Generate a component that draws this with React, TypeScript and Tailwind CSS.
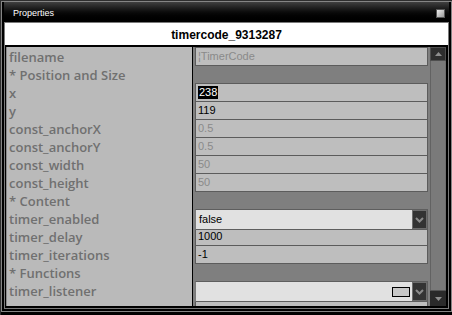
import React from "react";

type Row = {
  label: string;
  field?: { text: string; disabled?: boolean; selected?: boolean };
  combo?: { text?: string; swatch?: boolean };
};

const rows: Row[] = [
  { label: "filename", field: { text: "¦TimerCode", disabled: true } },
  { label: "* Position and Size" },
  { label: "x", field: { text: "238", selected: true } },
  { label: "y", field: { text: "119" } },
  { label: "const_anchorX", field: { text: "0.5", disabled: true } },
  { label: "const_anchorY", field: { text: "0.5", disabled: true } },
  { label: "const_width", field: { text: "50", disabled: true } },
  { label: "const_height", field: { text: "50", disabled: true } },
  { label: "* Content" },
  { label: "timer_enabled", combo: { text: "false" } },
  { label: "timer_delay", field: { text: "1000" } },
  { label: "timer_iterations", field: { text: "-1" } },
  { label: "* Functions" },
  { label: "timer_listener", combo: { swatch: true } },
  { label: "", field: { text: "" } },
];

const labelFont = { fontFamily: "'Open Sans', 'Liberation Sans', sans-serif" };
const valueFont = { fontFamily: "'Liberation Sans', Arial, sans-serif" };

function Chevron() {
  return (
    <svg width="9" height="6" viewBox="0 0 9 6">
      <path d="M1 1 L4.5 4.5 L8 1" fill="none" stroke="#8a8a8a" strokeWidth="2" />
    </svg>
  );
}

function Combo({ text, swatch }: { text?: string; swatch?: boolean }) {
  return (
    <div className="relative z-10 h-[21px] border border-[#5e5e5e] border-l-[#7a7a7a] bg-[#e1e1e1] flex items-center">
      <div className="flex-1 pl-[3px] text-[11px] text-black" style={valueFont}>
        {text}
      </div>
      {swatch && <div className="w-[18px] h-[10px] border border-black bg-[#c8c8c8] mr-[2px]" />}
      <div className="w-[15px] h-[19px] bg-[#333333] border border-[#6c6c6c] flex items-center justify-center">
        <Chevron />
      </div>
    </div>
  );
}

function Field({ text, disabled, selected }: { text: string; disabled?: boolean; selected?: boolean }) {
  return (
    <div
      className={`h-[19px] border border-[#5c5c5c] bg-[#bebebe] flex items-center pl-[2px] text-[11px] ${
        disabled ? "text-[#8a8a8a]" : "text-black"
      }`}
      style={valueFont}
    >
      {selected ? <span className="bg-black text-white px-px leading-[13px]">{text}</span> : text}
    </div>
  );
}

export default function App() {
  return (
    <div className="w-[452px] h-[315px] bg-black border-l border-t border-[#2e2e2e] pb-[4px]">
      <div className="h-[311px] border border-[#858585] px-[2px] pb-[2px] flex flex-col">
        {/* Title bar */}
        <div className="h-[20px] bg-linear-to-b from-[#404040] via-[#0c0c0c] to-black flex items-center pl-[9px] pr-[4px]">
          <div className="flex-1 text-white text-[9px] leading-[9px] mt-[2px]" style={valueFont}>
            Properties
          </div>
          <div className="w-[9px] h-[9px] mt-[2px] border border-[#555] bg-linear-to-br from-[#eeeeee] to-[#9a9a9a]" />
        </div>
        {/* Inner frame */}
        <div className="h-[287px] border border-[#7a7a7a] bg-black flex flex-col">
          <div
            className="h-[22px] bg-white text-center text-[12px] font-bold leading-[22px] pt-px text-black"
            style={valueFont}
          >
            timercode_9313287
          </div>
          <div className="h-[259px] mt-[2px] flex overflow-hidden pl-px pr-px">
            {/* labels */}
            <div className="w-[187px] border-l border-[#8a8a8a] border-r border-r-black bg-[#bababa] flex flex-col">
              {rows.map((r, i) => (
                <div
                  key={i}
                  className="h-[18px] shrink-0 pl-[2px] pt-px text-[13px] leading-[18px] font-semibold text-[#707070] whitespace-nowrap"
                  style={labelFont}
                >
                  {r.label}
                </div>
              ))}
            </div>
            {/* values */}
            <div className="w-[237px] bg-[#7f7f7f] pl-[2px] pr-[2px] flex flex-col">
              {rows.map((r, i) => (
                <div key={i} className="h-[18px] shrink-0">
                  {r.field && <Field {...r.field} />}
                  {r.combo && <Combo {...r.combo} />}
                </div>
              ))}
            </div>
            {/* scrollbar */}
            <div className="w-[16px] flex flex-col">
              <div className="h-[14px] bg-[#2e2e2e] border border-[#4e4e4e] flex items-center justify-center">
                <svg width="7" height="4" viewBox="0 0 7 4">
                  <polygon points="0,4 3.5,0 7,4" fill="#8e8e8e" />
                </svg>
              </div>
              <div className="flex-1 bg-[#7a7a7a] border-l border-[#626262] border-r border-r-[#6e6e6e]" />
              <div className="h-[16px] bg-[#2a2a2a] border-t border-[#555] flex items-center justify-center">
                <svg width="7" height="4" viewBox="0 0 7 4">
                  <polygon points="0,0 7,0 3.5,4" fill="#8e8e8e" />
                </svg>
              </div>
            </div>
          </div>
        </div>
      </div>
    </div>
  );
}
